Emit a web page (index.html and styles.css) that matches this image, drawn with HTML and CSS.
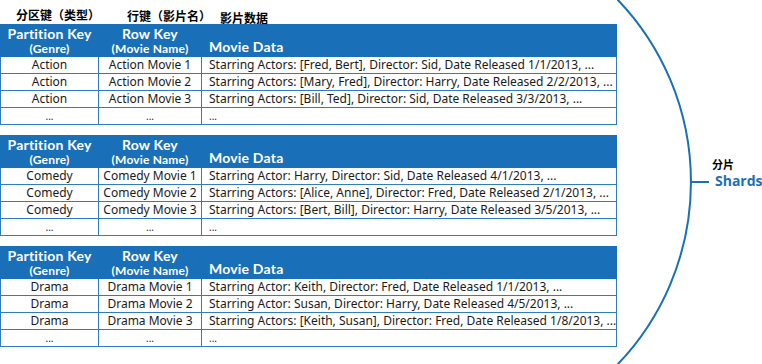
FILE: index.html
```html
<!DOCTYPE html>
<html>
<head>
<meta charset="utf-8">
<link rel="stylesheet" href="styles.css">
</head>
<body>
<div class="page">
  <div class="left">
    <div class="labels">
      <span class="lab lab1">分区键（类型）</span>
      <span class="lab lab2">行键（影片名）</span>
      <span class="lab lab3">影片数据</span>
    </div>
    <div class="tables">
      <table class="grid">
        <tr class="head"><th class="c1"><div class="h1">Partition Key</div><div class="h2">(Genre)</div></th><th class="c2"><div class="h1">Row Key</div><div class="h2">(Movie Name)</div></th><th class="c3"><div class="h3">Movie Data</div></th></tr>
        <tr><td class="c1">Action</td><td class="c2">Action Movie 1</td><td class="c3">Starring Actors: [Fred, Bert], Director: Sid, Date Released 1/1/2013, ...</td></tr>
        <tr><td class="c1">Action</td><td class="c2">Action Movie 2</td><td class="c3">Starring Actors: [Mary, Fred], Director: Harry, Date Released 2/2/2013, ...</td></tr>
        <tr><td class="c1">Action</td><td class="c2">Action Movie 3</td><td class="c3">Starring Actors: [Bill, Ted], Director: Sid, Date Released 3/3/2013, ...</td></tr>
        <tr class="dots"><td class="c1">...</td><td class="c2">...</td><td class="c3">...</td></tr>
      </table>
      <table class="grid">
        <tr class="head"><th class="c1"><div class="h1">Partition Key</div><div class="h2">(Genre)</div></th><th class="c2"><div class="h1">Row Key</div><div class="h2">(Movie Name)</div></th><th class="c3"><div class="h3">Movie Data</div></th></tr>
        <tr><td class="c1">Comedy</td><td class="c2">Comedy Movie 1</td><td class="c3">Starring Actor: Harry, Director: Sid, Date Released 4/1/2013, ...</td></tr>
        <tr><td class="c1">Comedy</td><td class="c2">Comedy Movie 2</td><td class="c3">Starring Actors: [Alice, Anne], Director: Fred, Date Released 2/1/2013, ...</td></tr>
        <tr><td class="c1">Comedy</td><td class="c2">Comedy Movie 3</td><td class="c3">Starring Actors: [Bert, Bill], Director: Harry, Date Released 3/5/2013, ...</td></tr>
        <tr class="dots"><td class="c1">...</td><td class="c2">...</td><td class="c3">...</td></tr>
      </table>
      <table class="grid">
        <tr class="head"><th class="c1"><div class="h1">Partition Key</div><div class="h2">(Genre)</div></th><th class="c2"><div class="h1">Row Key</div><div class="h2">(Movie Name)</div></th><th class="c3"><div class="h3">Movie Data</div></th></tr>
        <tr><td class="c1">Drama</td><td class="c2">Drama Movie 1</td><td class="c3">Starring Actor: Keith, Director: Fred, Date Released 1/1/2013, ...</td></tr>
        <tr><td class="c1">Drama</td><td class="c2">Drama Movie 2</td><td class="c3">Starring Actor: Susan, Director: Harry, Date Released 4/5/2013, ...</td></tr>
        <tr><td class="c1">Drama</td><td class="c2">Drama Movie 3</td><td class="c3">Starring Actors: [Keith, Susan], Director: Fred, Date Released 1/8/2013, ...</td></tr>
        <tr class="dots"><td class="c1">...</td><td class="c2">...</td><td class="c3">...</td></tr>
      </table>
    </div>
  </div>
  <div class="right">
    <svg class="arc" width="145" height="364" viewBox="0 0 145 364">
      <path d="M 0 -1 A 263.4 263.4 0 0 1 0 365" fill="none" stroke="#1a70b8" stroke-width="2"/>
      <line x1="73" y1="182" x2="92" y2="182" stroke="#1a70b8" stroke-width="2"/>
    </svg>
    <div class="shard-label">
      <div class="cn">分片</div>
      <div class="en">Shards</div>
    </div>
  </div>
</div>
</body>
</html>
```
FILE: styles.css
```css
html, body {
  margin: 0;
  padding: 0;
  background: #ffffff;
}
body {
  font-family: "Noto Sans", "Noto Sans CJK SC", sans-serif;
  color: #1a1a1a;
}
.page {
  display: flex;
  width: 762px;
  height: 364px;
  overflow: hidden;
}
.left {
  width: 617px;
  display: flex;
  flex-direction: column;
}
.labels {
  height: 24px;
  position: relative;
  font-family: "Noto Sans CJK SC", sans-serif;
  font-weight: bold;
  font-size: 12px;
  color: #000;
}
.lab {
  position: absolute;
}
.lab1 { left: 16px; top: 6px; }
.lab2 { left: 127px; top: 7px; }
.lab3 { left: 220px; top: 9px; }
.tables {
  display: flex;
  flex-direction: column;
  gap: 10px;
}
.grid {
  border-collapse: collapse;
  width: 617px;
  table-layout: fixed;
  font-size: 12px;
}
.grid td, .grid th {
  border: 1px solid #2f7cc2;
  padding: 0;
  height: 16px;
  line-height: 16px;
  white-space: nowrap;
  overflow: hidden;
}
.grid .c1 { width: 97px; text-align: center; }
.grid .c2 { width: 102px; text-align: center; }
.grid .c3 { text-align: left; padding-left: 7px; }
.grid .head th {
  background: #1a70b8;
  color: #fff;
  height: 31px;
  border-color: #1a70b8;
  vertical-align: top;
  font-weight: bold;
  font-family: "Lato", "Noto Sans", sans-serif;
}
.h1 {
  font-size: 14px;
  line-height: 17px;
  letter-spacing: 0.2px;
}
.h2 {
  font-size: 12px;
  line-height: 14px;
  letter-spacing: 0.2px;
}
.h3 {
  font-size: 14px;
  line-height: 17px;
  letter-spacing: 0.2px;
  margin-top: 13px;
}
.dots td {
  font-size: 10px;
  line-height: 16px;
}
.right {
  position: relative;
  width: 145px;
  height: 364px;
}
.arc {
  display: block;
}
.shard-label {
  position: absolute;
  left: 95px;
  top: 157px;
}
.cn {
  font-family: "Noto Sans CJK SC", sans-serif;
  font-weight: bold;
  font-size: 11px;
  line-height: 15px;
  color: #000;
}
.en {
  font-family: "Open Sans", sans-serif;
  font-weight: bold;
  font-size: 14px;
  line-height: 17px;
  color: #1a70b8;
  margin-left: 3px;
}
```
